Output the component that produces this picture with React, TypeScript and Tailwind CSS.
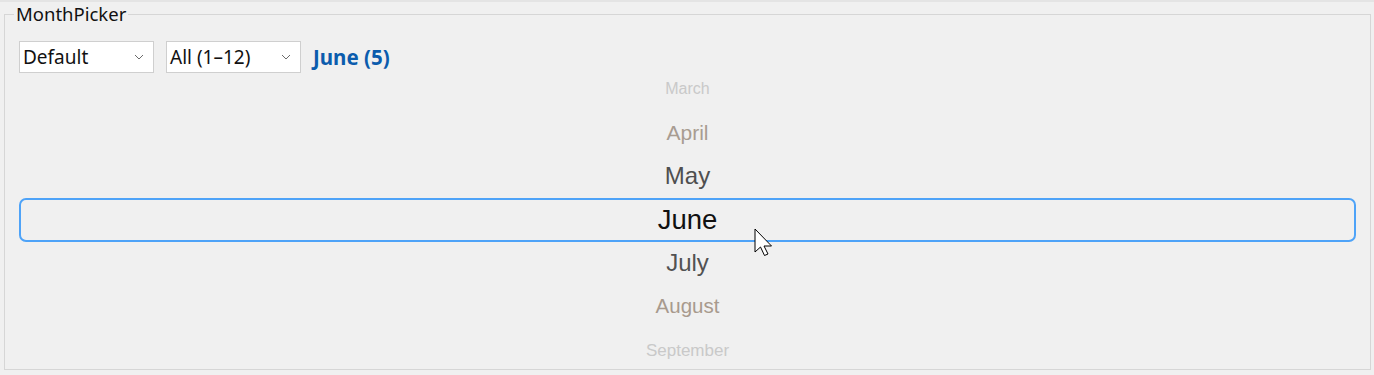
import React from "react";

const ui = { fontFamily: '"Noto Sans", "Open Sans", sans-serif' };
const wheel = { fontFamily: '"Liberation Sans", Arial, sans-serif' };

function Chevron() {
  return (
    <svg width="10" height="6" viewBox="0 0 10 6" className="shrink-0">
      <path d="M1 1 L5 5 L9 1" fill="none" stroke="#6b6b6b" strokeWidth="1" />
    </svg>
  );
}

function Select({ label, width }: { label: string; width: string }) {
  return (
    <div
      className={`flex h-[32px] items-center justify-between border border-[#cfcfcf] bg-white pl-[3px] pr-[9px] text-[19px] leading-none text-[#111] ${width}`}
    >
      <span>{label}</span>
      <Chevron />
    </div>
  );
}

function Cursor() {
  return (
    <svg
      className="pointer-events-none absolute left-[754px] top-[226px]"
      width="22"
      height="32"
      viewBox="0 0 22 32"
    >
      <path
        d="M1 1 L1 24 L6.5 19 L10.5 27.5 L14 26 L10 18 L17.5 18 Z"
        fill="#ffffff"
        stroke="#000000"
        strokeWidth="1"
        strokeLinejoin="round"
      />
    </svg>
  );
}

export default function App() {
  const rows: { m: string; cls: string }[] = [
    { m: "March", cls: "text-[16px] text-[#c9c9c9]" },
    { m: "April", cls: "text-[21px] text-[#a89c91]" },
    { m: "May", cls: "text-[24px] text-[#4f4f4f]" },
    { m: "June", cls: "text-[27.5px] text-[#111111]" },
    { m: "July", cls: "text-[24px] text-[#525252]" },
    { m: "August", cls: "text-[20.5px] text-[#a89a8d]" },
    { m: "September", cls: "text-[17px] text-[#c9c9c9]" },
  ];
  return (
    <div className="relative h-[375px] w-[1374px] overflow-hidden border-t-2 border-[#e4e4e4] bg-[#f0f0f0]" style={ui}>
      <fieldset className="ml-[4px] mt-[2px] h-[366px] w-[1367px] border border-[#d6d6d6] px-[14px] pb-0 pt-[17px]">
        <legend className="ml-[-5px] px-[2px] text-[18.5px] leading-[20px] text-[#111]">MonthPicker</legend>
        <div className="flex items-center gap-[12px]">
          <Select label="Default" width="w-[135px]" />
          <Select label="All (1–12)" width="w-[135px]" />
          <span className="text-[20.5px] font-bold text-[#0b5cad]">June (5)</span>
        </div>
        <div className="h-[295px] overflow-hidden" style={wheel}>
          <div className="-mt-[5.5px] flex flex-col">
            {rows.map((r) => (
              <div
                key={r.m}
                className={`flex h-[43.5px] items-center justify-center ${
                  r.m === "June" ? "rounded-[7px] border-2 border-[#4ea3f8]" : ""
                } ${r.cls}`}
              >
                {r.m}
              </div>
            ))}
          </div>
        </div>
      </fieldset>
      <Cursor />
    </div>
  );
}
